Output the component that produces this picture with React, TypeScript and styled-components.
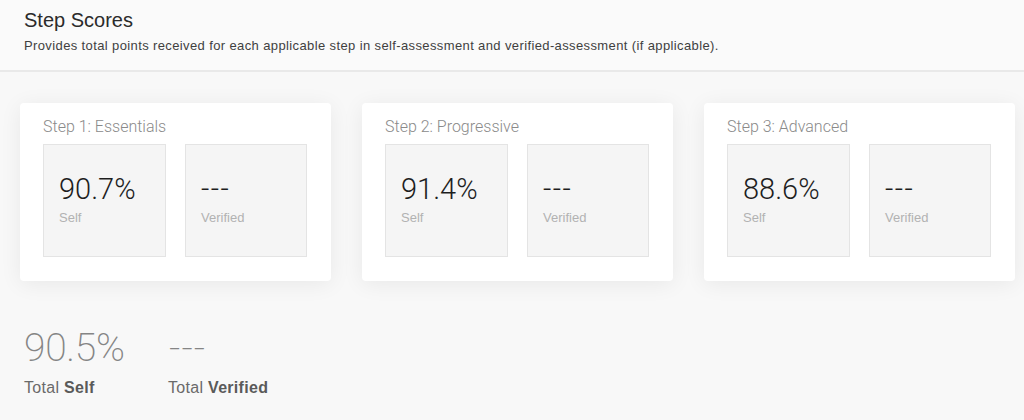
import React from "react";
import styled, { createGlobalStyle } from "styled-components";

const GlobalStyle = createGlobalStyle`
  html, body {
    margin: 0;
    padding: 0;
    background: #f8f8f8;
  }
  body {
    font-family: "Liberation Sans", Arial, sans-serif;
    -webkit-font-smoothing: antialiased;
  }
`;

const Page = styled.div`
  width: 1024px;
  height: 420px;
  overflow: hidden;
  background: #f8f8f8;
`;

const Header = styled.header`
  height: 72px;
  box-sizing: border-box;
  padding: 9px 24px 0;
  background: #fafafa;
  border-bottom: 2px solid #e9e9e9;
`;

const Title = styled.h1`
  margin: 0;
  font-family: "Liberation Sans", Arial, sans-serif;
  font-weight: 400;
  font-size: 20px;
  line-height: 22px;
  color: #2b2b2b;
`;

const Subtitle = styled.p`
  margin: 6px 0 0;
  font-size: 13px;
  line-height: 18px;
  letter-spacing: 0.38px;
  color: #3f3f3f;
`;

const Body = styled.main`
  padding: 31px 0 0 20px;
`;

const CardRow = styled.div`
  display: grid;
  grid-template-columns: repeat(3, 311px);
  column-gap: 31px;
`;

const Card = styled.section`
  height: 178px;
  box-sizing: border-box;
  padding: 14px 24px 24px 23px;
  background: #ffffff;
  border-radius: 4px;
  box-shadow: 0 3px 22px rgba(0, 0, 0, 0.065);
`;

const CardTitle = styled.h2`
  margin: 0 0 7px;
  font-family: Roboto, "Liberation Sans", sans-serif;
  font-weight: 300;
  font-size: 16px;
  line-height: 20px;
  color: #8a8a8a;
`;

const Boxes = styled.div`
  display: grid;
  grid-template-columns: 123px 122px;
  column-gap: 19px;
`;

const ScoreBox = styled.div`
  height: 113px;
  box-sizing: border-box;
  padding: 27px 0 0 15px;
  background: #f5f5f5;
  border: 1px solid #e4e4e4;
`;

const ScoreValue = styled.div<{ $empty?: boolean }>`
  font-family: Roboto, "Liberation Sans", sans-serif;
  font-weight: 300;
  font-size: 29px;
  line-height: 34px;
  color: #1e1e1e;
  letter-spacing: ${(p) => (p.$empty ? "1.5px" : "0")};
`;

const ScoreLabel = styled.div`
  margin-top: 4px;
  font-size: 13px;
  line-height: 16px;
  color: #b2b2b2;
`;

const Totals = styled.div`
  display: grid;
  grid-template-columns: 144px auto;
  margin-top: 44px;
  padding-left: 4px;
`;

const Total = styled.div``;

const TotalValue = styled.div<{ $empty?: boolean }>`
  font-family: Roboto, "Liberation Sans", sans-serif;
  font-weight: 200;
  font-size: 39px;
  line-height: 46px;
  color: #858585;
  letter-spacing: ${(p) => (p.$empty ? "1px" : "-0.3px")};
  padding-left: ${(p) => (p.$empty ? "1px" : "0")};
`;

const TotalLabel = styled.div`
  margin-top: 8px;
  font-size: 16px;
  line-height: 18px;
  letter-spacing: 0.3px;
  color: #6a6a6a;

  strong {
    font-weight: 700;
    color: #5a5a5a;
  }
`;

const steps = [
  { title: "Step 1: Essentials", self: "90.7%", verified: "---" },
  { title: "Step 2: Progressive", self: "91.4%", verified: "---" },
  { title: "Step 3: Advanced", self: "88.6%", verified: "---" },
];

export default function App() {
  return (
    <Page>
      <GlobalStyle />
      <Header>
        <Title>Step Scores</Title>
        <Subtitle>
          Provides total points received for each applicable step in self-assessment and
          verified-assessment (if applicable).
        </Subtitle>
      </Header>
      <Body>
        <CardRow>
          {steps.map((s) => (
            <Card key={s.title}>
              <CardTitle>{s.title}</CardTitle>
              <Boxes>
                <ScoreBox>
                  <ScoreValue>{s.self}</ScoreValue>
                  <ScoreLabel>Self</ScoreLabel>
                </ScoreBox>
                <ScoreBox>
                  <ScoreValue $empty>{s.verified}</ScoreValue>
                  <ScoreLabel>Verified</ScoreLabel>
                </ScoreBox>
              </Boxes>
            </Card>
          ))}
        </CardRow>
        <Totals>
          <Total>
            <TotalValue>90.5%</TotalValue>
            <TotalLabel>
              Total <strong>Self</strong>
            </TotalLabel>
          </Total>
          <Total>
            <TotalValue $empty>---</TotalValue>
            <TotalLabel>
              Total <strong>Verified</strong>
            </TotalLabel>
          </Total>
        </Totals>
      </Body>
    </Page>
  );
}
